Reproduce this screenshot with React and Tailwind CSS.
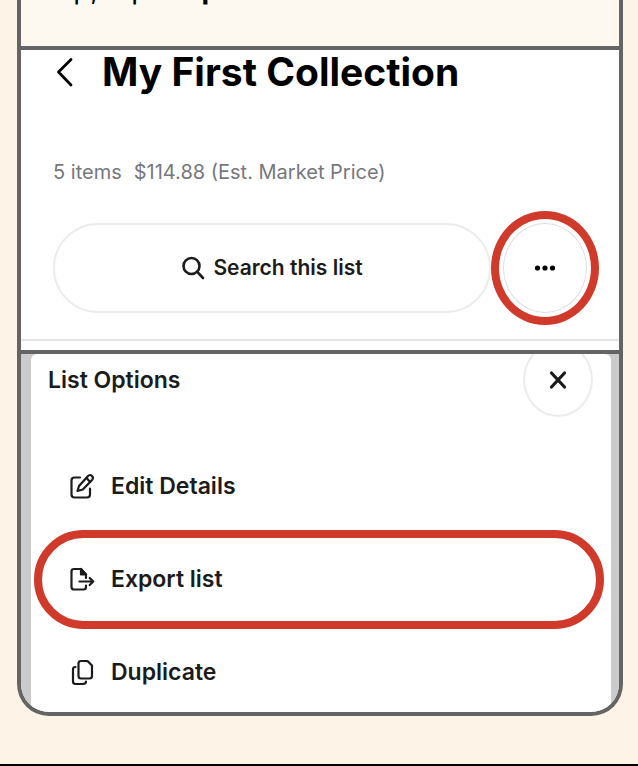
const ringColor = 'border-[#cf3a2a]';

const iconProps = {
  viewBox: '0 0 24 24',
  fill: 'none',
  stroke: 'currentColor',
  strokeLinecap: 'round',
  strokeLinejoin: 'round',
  'aria-hidden': true,
};

function BackIcon() {
  return (
    <svg {...iconProps} viewBox="0 0 20 32" strokeWidth="2.8" className="h-8 w-5 text-black">
      <path d="M16 3.5 L3.5 16 L16 29" />
    </svg>
  );
}

function SearchIcon() {
  return (
    <svg {...iconProps} strokeWidth="2.6" className="size-6">
      <circle cx="10.5" cy="10" r="8" />
      <path d="M16.3 15.8 L22 22" />
    </svg>
  );
}

function DotsIcon() {
  return (
    <svg viewBox="0 0 24 24" fill="currentColor" className="size-6 text-black" aria-hidden="true">
      <circle cx="4.5" cy="12" r="2.6" />
      <circle cx="12" cy="12" r="2.6" />
      <circle cx="19.5" cy="12" r="2.6" />
    </svg>
  );
}

function CloseIcon() {
  return (
    <svg {...iconProps} strokeWidth="3.2" className="size-6">
      <path d="M5.5 5 L18.5 19 M18.5 5 L5.5 19" />
    </svg>
  );
}

function EditIcon() {
  return (
    <svg {...iconProps} viewBox="0 0 26 28" strokeWidth="2.2" className="h-7 w-6.5">
      <path d="M11 4.5 H5.5 Q2.5 4.5 2.5 7.5 V21.5 Q2.5 24.5 5.5 24.5 H18 Q21 24.5 21 21.5 V15.5" />
      <path d="M8.500 18 L10 13 L18.800 3.200 Q21 0.900 23 3 Q24.800 5 23 7 L13.800 16.500 Z" />
      <path d="M17.500 5 L21.200 9" />
    </svg>
  );
}

function ExportIcon() {
  return (
    <svg {...iconProps} viewBox="0 0 26 28" strokeWidth="2.2" className="h-7 w-6.5">
      <path d="M17 19.500 V21 Q17 23.500 14.500 23.500 H5 Q2.500 23.500 2.500 21 V5.500 Q2.500 3 5 3 H12 L17 8.500 V12" />
      <path d="M12 3 V8.500 H17 Z" fill="currentColor" />
      <path d="M10.500 15.500 H24.300 M20.700 12 L24.300 15.500 L20.700 19" />
    </svg>
  );
}

function DuplicateIcon() {
  return (
    <svg {...iconProps} viewBox="0 0 26 28" strokeWidth="2.2" className="h-7 w-6.5">
      <path d="M12 2 H18.500 L23 6.500 V17 Q23 19.500 20.500 19.500 H12 Q9.500 19.500 9.500 17 V4.500 Q9.500 2 12 2 Z" />
      <path d="M6.500 8 Q4 8 4 10.500 V22.500 Q4 25 6.500 25 H14 Q17 25 17 22.500" />
    </svg>
  );
}

function CollectionPanel() {
  return (
    <section className="border-b-4 border-[#646464] bg-white">
      <div className="border-b-2 border-[#e5e5e8] px-8 pb-[26px]">
        <header className="flex items-center gap-[27px] pb-16">
          <button type="button" aria-label="Back" className="ml-[2px]">
            <BackIcon />
          </button>
          <h1 className="text-[39px] leading-[44px] font-bold whitespace-nowrap text-black">
            My First Collection
          </h1>
        </header>
        <p className="flex gap-3 pt-[2px] pb-[39px] text-xl leading-6 text-[#77777d]">
          <span>5 items</span>
          <span>$114.88 (Est. Market Price)</span>
        </p>
        <div className="flex items-center gap-3">
          <button
            type="button"
            className="flex h-[90px] flex-1 items-center justify-center gap-2 rounded-full border-2 border-[#ececec] text-[21px] font-semibold"
          >
            <SearchIcon />
            Search this list
          </button>
          <div className="relative">
            <button
              type="button"
              aria-label="More options"
              className="flex h-[90px] w-[84px] items-center justify-center rounded-[50%] border border-[#dedee6]"
            >
              <DotsIcon />
            </button>
            <span className={`pointer-events-none absolute -inset-3 rounded-[50%] border-8 ${ringColor}`} />
          </div>
        </div>
      </div>
      <div className="h-[9px]" />
    </section>
  );
}

function Option({ icon, label, highlighted }) {
  return (
    <li className="relative">
      <button type="button" className="flex h-[93px] w-full items-center gap-4 pl-[38px] text-[23px] font-semibold">
        {icon}
        {label}
      </button>
      {highlighted && (
        <span className={`pointer-events-none absolute -inset-y-[3px] right-[7px] left-[3px] rounded-full border-8 ${ringColor}`} />
      )}
    </li>
  );
}

function OptionsPanel() {
  return (
    <section className="overflow-hidden bg-[#cbcbcb] pr-2 pl-[10px]">
      <div className="-mb-[7px] rounded-t-[6px] bg-white">
        <header className="flex h-[86px] items-start justify-between pr-[18px] pl-[17px]">
          <h2 className="pt-3 text-[23px] leading-7 font-semibold">List Options</h2>
          <button
            type="button"
            aria-label="Close"
            className="-mt-3 flex h-[75px] w-[70px] items-center justify-center rounded-[50%] border-2 border-[#ececec]"
          >
            <CloseIcon />
          </button>
        </header>
        <ul>
          <Option icon={<EditIcon />} label="Edit Details" />
          <Option icon={<ExportIcon />} label="Export list" highlighted />
          <Option icon={<DuplicateIcon />} label="Duplicate" />
        </ul>
      </div>
    </section>
  );
}

export default function App() {
  return (
    <div className="border-b-2 border-black bg-[#fdf4e7] pr-[15px] pb-12 pl-[17px] font-[Inter,sans-serif] text-[#1b1b1b]">
      <main className="overflow-hidden rounded-b-[32px] border-x-4 border-b-4 border-[#646464]">
        <div className="flex h-[50px] items-start overflow-hidden border-b-4 border-[#646464] bg-[#fef9f0]">
          <p className="-mt-[25px] pl-[9px] text-[28px] leading-7 text-black">
            Step, tap <b className="ml-3">Exp</b>
          </p>
        </div>
        <CollectionPanel />
        <OptionsPanel />
      </main>
    </div>
  );
}
